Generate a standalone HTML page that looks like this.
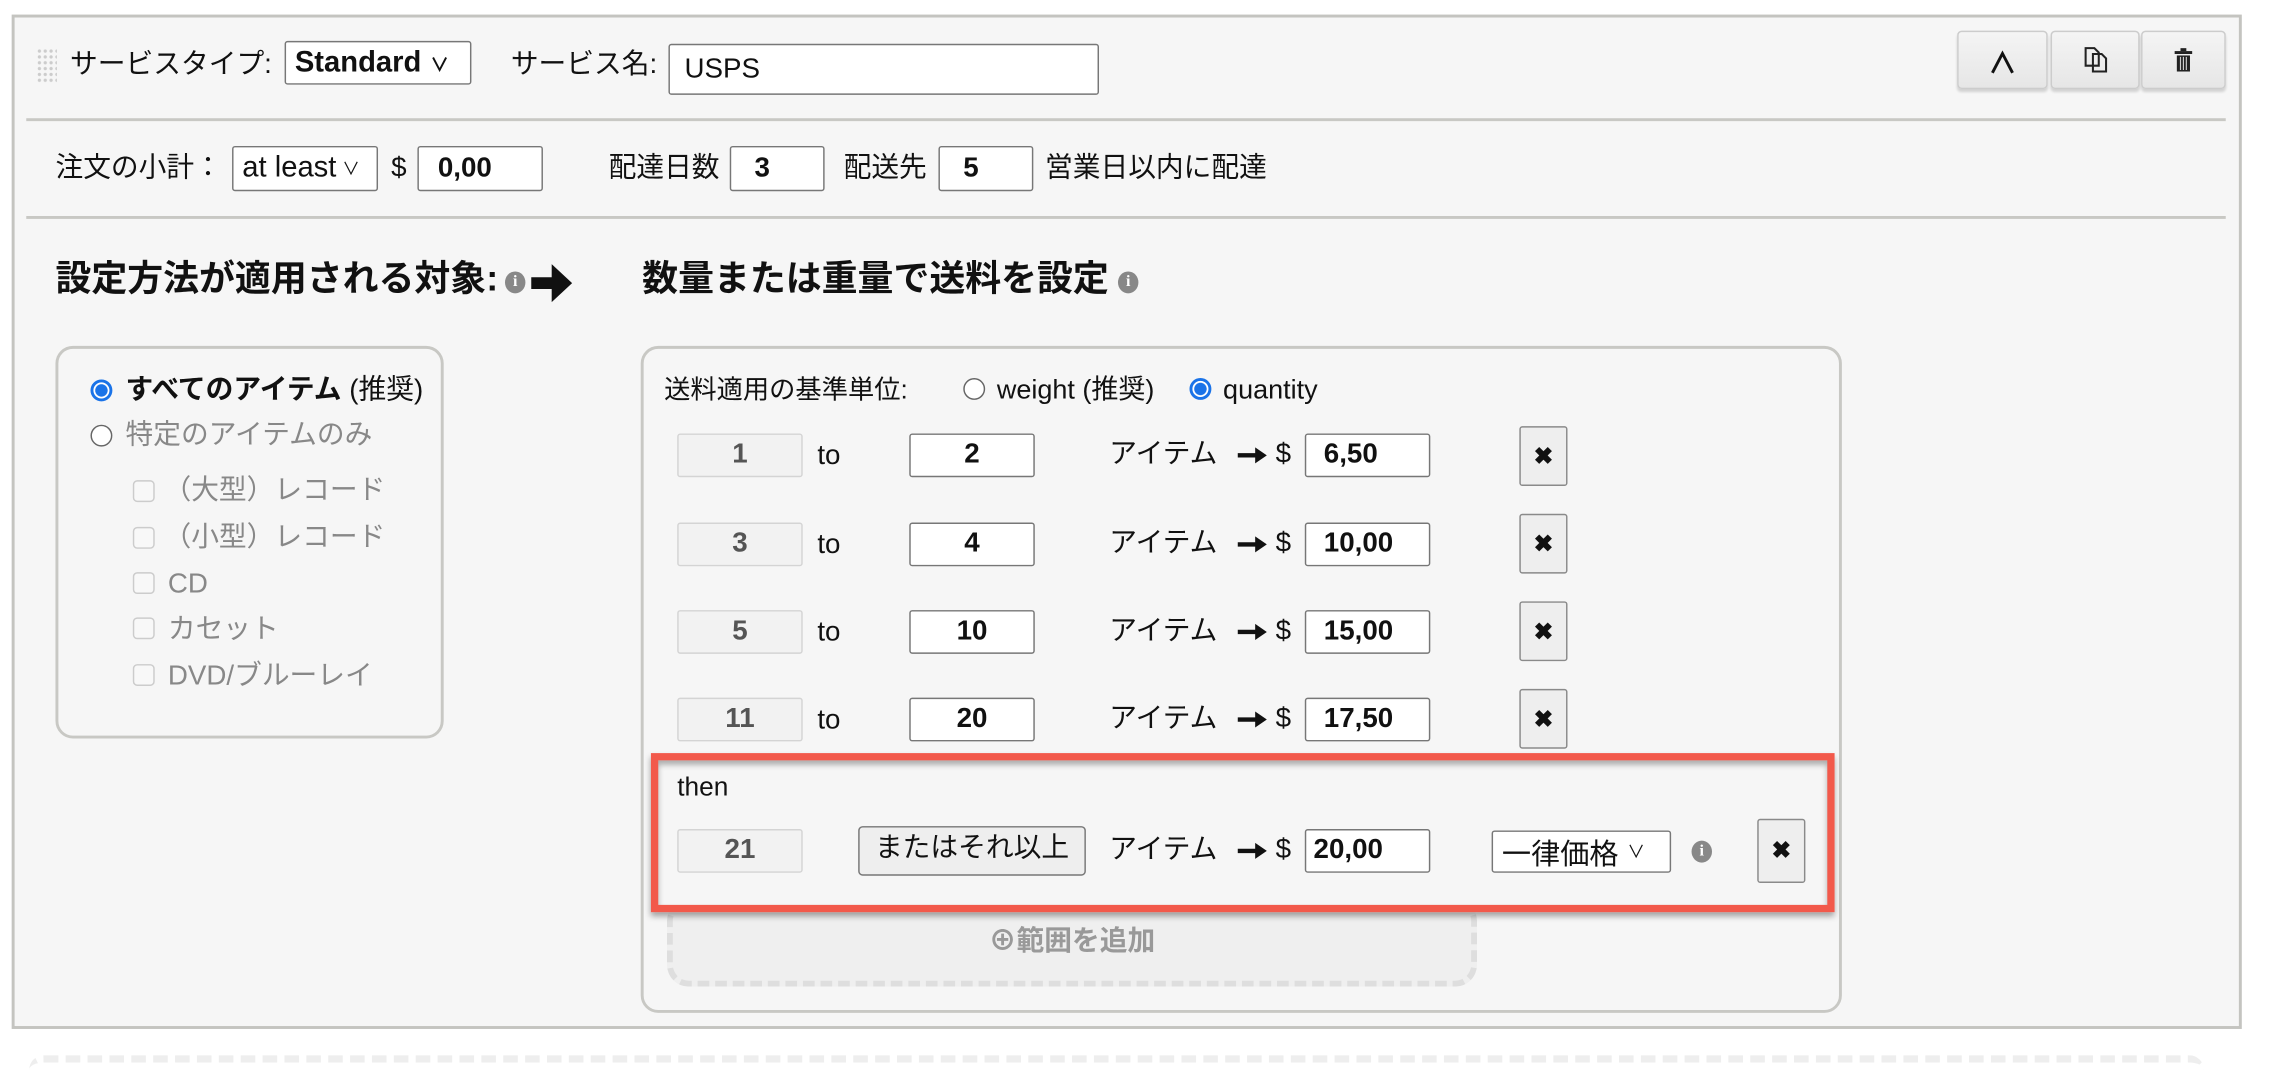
<!DOCTYPE html>
<html><head><meta charset="utf-8"><style>
html,body{margin:0;padding:0;background:#fff;width:2288px;height:1064px;overflow:hidden}
#w{position:absolute;left:0;top:0;width:1568px;height:729px;transform:scale(1.4595);transform-origin:0 0;font-family:"Liberation Sans","Noto Sans CJK JP",sans-serif;font-size:19px;color:#111}
.a{position:absolute;white-space:nowrap;line-height:24px}
.inp{position:absolute;background:#fff;border:1px solid #777;border-radius:2px;box-sizing:border-box;font-weight:bold;display:flex;align-items:center}
.ro{position:absolute;background:#f2f2f2;border:1px solid #d4d4d4;border-radius:2px;box-sizing:border-box;color:#555;font-weight:bold;display:flex;align-items:center;justify-content:center}
.xb{position:absolute;background:#eee;border:1px solid #8a8a8a;border-radius:2px;box-sizing:border-box;display:flex;align-items:center;justify-content:center;font-weight:bold;font-size:16px}
.rad{position:absolute;width:15px;height:15px;border-radius:50%;border:1px solid #666;background:#fff;box-sizing:border-box}
.rad.on{border:2px solid #1a73e8;background:radial-gradient(#1a73e8 0 4px,#fff 4.5px)}
.cb{position:absolute;width:15px;height:15px;border:1px solid #ccc;border-radius:3px;box-sizing:border-box;background:#f8f8f8}
.info{position:absolute;width:14px;height:15px;border-radius:50%;background:#888;color:#fff;font-size:11px;font-weight:bold;text-align:center;line-height:15px;font-family:"Liberation Serif",serif}
.gray{color:#888}
.tb{position:absolute;top:21px;height:40px;background:linear-gradient(#f4f4f4,#e6e6e6);border:1px solid #ccc;border-radius:3px;box-sizing:border-box;box-shadow:0 2px 2px rgba(0,0,0,.15);display:flex;align-items:center;justify-content:center}
.ar{position:absolute;width:20px;height:12px}
</style></head><body><div id="w">
<svg width="0" height="0" style="position:absolute"><defs><symbol id="arw" viewBox="0 0 20 12"><path d="M0 4.5h12V0.5l8 5.5-8 5.5V7.5H0z" fill="#111"/></symbol></defs></svg>
<div style="position:absolute;left:8px;top:10px;width:1528px;height:695px;background:#f6f6f6;border:2px solid #c4c4c0;box-sizing:border-box"></div>
<div class="a" style="left:25px;top:33px;width:14px;height:24px;background-image:radial-gradient(#ccc 1px,transparent 1.3px);background-size:4px 4px"></div>
<div class="a" style="left:48px;top:33px">サービスタイプ:</div>
<div class="inp" style="left:195px;top:28px;width:128px;height:30px;padding-left:6px;font-size:20px">Standard <span style="font-size:13px;margin-left:6px">&#x2228;</span></div>
<div class="a" style="left:350px;top:33px">サービス名:</div>
<div class="inp" style="left:458px;top:30px;width:295px;height:35px;padding-left:10px;font-weight:normal">USPS</div>
<div class="tb" style="left:1341px;width:62px;font-weight:bold;font-size:20px">&#x2227;</div>
<div class="tb" style="left:1405px;width:61px"><svg width="18" height="20" viewBox="0 0 18 20"><path d="M2 2h6l3 3v9H2z M7 6h6l3 3v9H7z" fill="none" stroke="#222" stroke-width="1.4"/></svg></div>
<div class="tb" style="left:1467px;width:58px"><svg width="14" height="18" viewBox="0 0 14 18"><rect x="1" y="3" width="12" height="2" fill="#222"/><rect x="5" y="1" width="4" height="2" fill="#222"/><rect x="2.5" y="6" width="9" height="11" fill="#222"/><path d="M5 7v9M7 7v9M9 7v9" stroke="#ccc" stroke-width=".8"/></svg></div>
<div class="a" style="left:18px;top:81px;width:1507px;height:2px;background:#c8c8c4"></div>
<div class="a" style="left:38px;top:104px">注文の小計：</div>
<div class="inp" style="left:159px;top:100px;width:100px;height:31px;font-weight:normal;padding-left:6px;font-size:20px">at least<span style="font-size:12px;margin-left:4px">&#x2228;</span></div>
<div class="a" style="left:268px;top:104px">$</div>
<div class="inp" style="left:286px;top:100px;width:86px;height:31px;padding-left:13px">0,00</div>
<div class="a" style="left:417px;top:104px">配達日数</div>
<div class="inp" style="left:500px;top:100px;width:65px;height:31px;padding-left:16px">3</div>
<div class="a" style="left:578px;top:104px">配送先</div>
<div class="inp" style="left:643px;top:100px;width:65px;height:31px;padding-left:16px">5</div>
<div class="a" style="left:716px;top:104px">営業日以内に配達</div>
<div class="a" style="left:18px;top:148px;width:1507px;height:2px;background:#c8c8c4"></div>
<div class="a" style="left:38px;top:178px;font-size:24.6px;font-weight:bold;line-height:28px">設定方法が適用される対象:</div>
<div class="info" style="left:346px;top:186px">i</div>
<svg class="a" style="left:362px;top:177px" width="32" height="34" viewBox="0 0 32 34"><path d="M2 13h14V4l14 13-14 13v-9H2z" fill="#111"/></svg>
<div class="a" style="left:440px;top:178px;font-size:24.6px;font-weight:bold;line-height:28px">数量または重量で送料を設定</div>
<div class="info" style="left:766px;top:186px">i</div>
<div class="a" style="left:38px;top:237px;width:266px;height:269px;border:2px solid #c8c8c4;border-radius:12px;box-sizing:border-box"></div>
<div class="rad on" style="left:62px;top:260px"></div>
<div class="a" style="left:86px;top:256px"><b>すべてのアイテム</b> (推奨)</div>
<div class="rad" style="left:62px;top:291px"></div>
<div class="a gray" style="left:86px;top:287px">特定のアイテムのみ</div>
<div class="cb" style="left:91px;top:329px"></div><div class="a gray" style="left:112px;top:325px">（大型）レコード</div>
<div class="cb" style="left:91px;top:361px"></div><div class="a gray" style="left:112px;top:357px">（小型）レコード</div>
<div class="cb" style="left:91px;top:392px"></div><div class="a gray" style="left:115px;top:389px">CD</div>
<div class="cb" style="left:91px;top:423px"></div><div class="a gray" style="left:115px;top:420px">カセット</div>
<div class="cb" style="left:91px;top:455px"></div><div class="a gray" style="left:115px;top:452px">DVD/ブルーレイ</div>
<div class="a" style="left:439px;top:237px;width:823px;height:457px;border:2px solid #c8c8c4;border-radius:12px;box-sizing:border-box"></div>
<div class="a" style="left:455px;top:255px;font-size:18px">送料適用の基準単位:</div>
<div class="rad" style="left:660px;top:259px"></div>
<div class="a" style="left:683px;top:255px;font-size:18.5px">weight (推奨)</div>
<div class="rad on" style="left:815px;top:259px"></div>
<div class="a" style="left:838px;top:255px;font-size:18.5px">quantity</div>

<div class="ro" style="left:464px;top:297px;width:86px;height:30px">1</div><div class="a" style="left:560px;top:301px">to</div>
<div class="inp" style="left:623px;top:297px;width:86px;height:30px;justify-content:center">2</div>
<div class="a" style="left:760px;top:300px">アイテム</div><svg class="ar" style="left:848px;top:306px"><use href="#arw"/></svg><div class="a" style="left:874px;top:300px">$</div>
<div class="inp" style="left:894px;top:297px;width:86px;height:30px;padding-left:12px">6,50</div>
<div class="xb" style="left:1041px;top:292px;width:33px;height:41px">&#x2716;</div>

<div class="ro" style="left:464px;top:358px;width:86px;height:30px">3</div><div class="a" style="left:560px;top:362px">to</div>
<div class="inp" style="left:623px;top:358px;width:86px;height:30px;justify-content:center">4</div>
<div class="a" style="left:760px;top:361px">アイテム</div><svg class="ar" style="left:848px;top:367px"><use href="#arw"/></svg><div class="a" style="left:874px;top:361px">$</div>
<div class="inp" style="left:894px;top:358px;width:86px;height:30px;padding-left:12px">10,00</div>
<div class="xb" style="left:1041px;top:352px;width:33px;height:41px">&#x2716;</div>

<div class="ro" style="left:464px;top:418px;width:86px;height:30px">5</div><div class="a" style="left:560px;top:422px">to</div>
<div class="inp" style="left:623px;top:418px;width:86px;height:30px;justify-content:center">10</div>
<div class="a" style="left:760px;top:421px">アイテム</div><svg class="ar" style="left:848px;top:427px"><use href="#arw"/></svg><div class="a" style="left:874px;top:421px">$</div>
<div class="inp" style="left:894px;top:418px;width:86px;height:30px;padding-left:12px">15,00</div>
<div class="xb" style="left:1041px;top:412px;width:33px;height:41px">&#x2716;</div>

<div class="ro" style="left:464px;top:478px;width:86px;height:30px">11</div><div class="a" style="left:560px;top:482px">to</div>
<div class="inp" style="left:623px;top:478px;width:86px;height:30px;justify-content:center">20</div>
<div class="a" style="left:760px;top:481px">アイテム</div><svg class="ar" style="left:848px;top:487px"><use href="#arw"/></svg><div class="a" style="left:874px;top:481px">$</div>
<div class="inp" style="left:894px;top:478px;width:86px;height:30px;padding-left:12px">17,50</div>
<div class="xb" style="left:1041px;top:472px;width:33px;height:41px">&#x2716;</div>

<div class="a" style="left:457px;top:616px;width:555px;height:60px;border:4px dashed #dedede;border-radius:15px;background:#efefef;box-sizing:border-box;text-align:center;line-height:52px;color:#999;font-weight:bold;font-size:19px">&#x2295;範囲を追加</div>

<div class="a" style="left:446px;top:516px;width:811px;height:109px;border:5px solid #f2594b;box-sizing:border-box;background:#f6f6f6;box-shadow:0 3px 4px rgba(0,0,0,.35), inset 0 3px 4px rgba(0,0,0,.3)"></div>
<div class="a" style="left:464px;top:527px;font-size:18px">then</div>
<div class="ro" style="left:464px;top:568px;width:86px;height:30px">21</div>
<div class="a" style="left:588px;top:566px;width:156px;height:34px;background:#eee;border:1px solid #777;border-radius:3px;box-sizing:border-box;text-align:center;line-height:30px">またはそれ以上</div>
<div class="a" style="left:760px;top:571px">アイテム</div><svg class="ar" style="left:848px;top:577px"><use href="#arw"/></svg><div class="a" style="left:874px;top:571px">$</div>
<div class="inp" style="left:894px;top:568px;width:86px;height:30px;padding-left:5px">20,00</div>
<div class="inp" style="left:1022px;top:569px;width:123px;height:29px;font-weight:normal;padding-left:6px;font-size:20px">一律価格<span style="font-size:12px;margin-left:6px">&#x2228;</span></div>
<div class="info" style="left:1159px;top:576px">i</div>
<div class="xb" style="left:1204px;top:561px;width:33px;height:44px">&#x2716;</div>

<div class="a" style="left:20px;top:723px;width:1490px;height:10px;border-top:5px dashed #eee;border-radius:10px 10px 0 0"></div>
</div></body></html>
